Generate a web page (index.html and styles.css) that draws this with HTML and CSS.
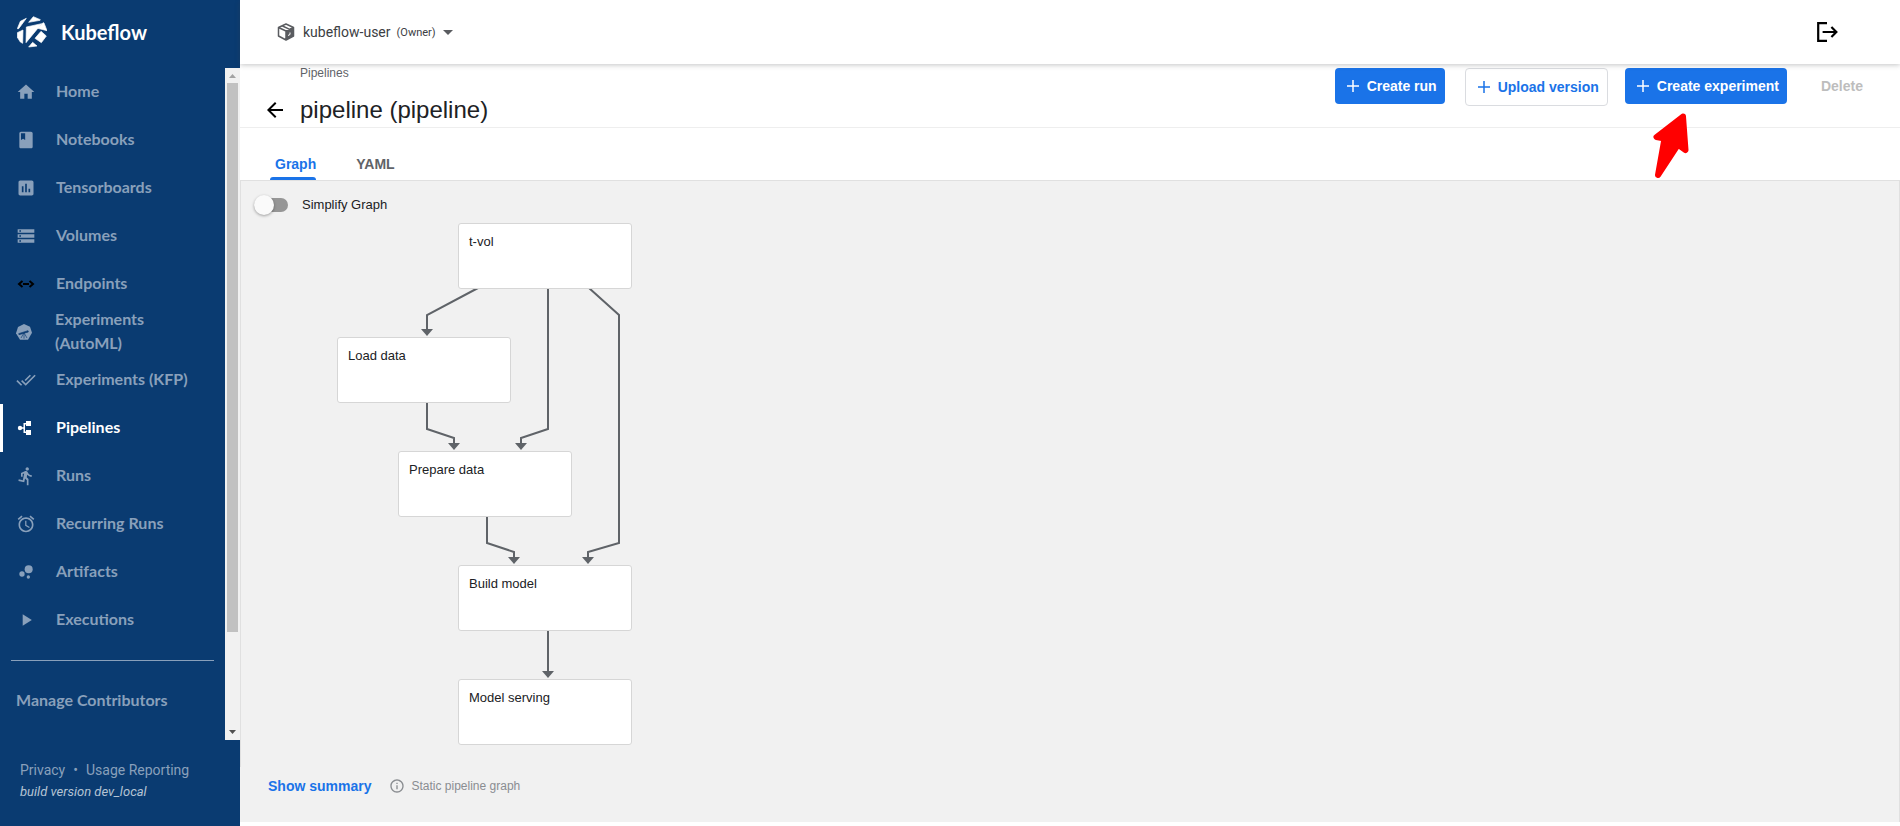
FILE: index.html
```
<!DOCTYPE html>
<html lang="en">
<head>
<meta charset="utf-8">
<title>Kubeflow Central Dashboard</title>
<link rel="stylesheet" href="styles.css">
</head>
<body>
<div class="app">
  <aside class="sidebar">
    <a class="brand" href="#">
      <svg class="brand-logo" viewBox="0 0 90 96" fill="#fff" stroke="#fff" stroke-width="2" stroke-linejoin="round">
        <path d="M28 7 L10 16 L1 38 L5 38 Z"/>
        <path d="M35 19 L49 2 L70 11 L69 13 Z"/>
        <path d="M28 33 L74 23 L27 80 Z"/>
        <path d="M78 20 L81 21 L90 44 L62 37 Z"/>
        <path d="M1 50 L18 42 L17 82 L10 78 L1 64 Z"/>
        <path d="M72 46 L88 60 L73 80 L54 67 Z"/>
        <path d="M35 93 L47 79 L60 90 Z"/>
      </svg>
      <span>Kubeflow</span>
    </a>
    <div class="scroll-area">
      <nav class="menu">
        <a class="item" href="#"><svg viewBox="0 0 24 24"><path d="M10 20v-6h4v6h5v-8h3L12 3 2 12h3v8z"/></svg><span>Home</span></a>
        <a class="item" href="#"><svg viewBox="0 0 24 24"><path d="M18 2H6c-1.100 0-2 .9-2 2v16c0 1.100.9 2 2 2h12c1.100 0 2-.9 2-2V4c0-1.100-.9-2-2-2zM6 4h5v8l-2.500-1.500L6 12V4z"/></svg><span>Notebooks</span></a>
        <a class="item" href="#"><svg viewBox="0 0 24 24"><path d="M19 3H5c-1.100 0-2 .9-2 2v14c0 1.100.9 2 2 2h14c1.100 0 2-.9 2-2V5c0-1.100-.9-2-2-2zM9 17H7v-7h2v7zm4 0h-2V7h2v10zm4 0h-2v-4h2v4z"/></svg><span>Tensorboards</span></a>
        <a class="item" href="#"><svg viewBox="0 0 24 24"><path d="M2 20h20v-4H2v4zm2-3h2v2H4v-2zM2 4v4h20V4H2zm4 3H4V5h2v2zm-4 7h20v-4H2v4zm2-3h2v2H4v-2z"/></svg><span>Volumes</span></a>
        <a class="item" href="#"><svg class="dark" viewBox="0 0 20 20"><path d="M6.500 7L3 10l3.500 3M13.500 7l3.500 3-3.500 3M7 10h6"/></svg><span>Endpoints</span></a>
        <a class="item automl" href="#"><svg viewBox="0 0 48 48"><path d="M24 0 L42 8 L48 26 L36 47 H12 L0 28 L6 9 Z"/><path class="cut" d="M8 29 L36 20 L37 24 L9 32 Z M24 27 V44 M23 28 L15 42 M25 28 L33 42"/></svg><span>Experiments (AutoML)</span></a>
        <a class="item" href="#"><svg viewBox="0 0 24 24"><path d="M18 7l-1.410-1.410-6.340 6.340 1.410 1.410L18 7zm4.240-1.410L11.660 16.170 7.480 12l-1.410 1.410L11.660 19l12-12-1.420-1.410zM.410 13.410L6 19l1.410-1.410L1.830 12 .410 13.410z"/></svg><span>Experiments (KFP)</span></a>
        <a class="item active" href="#"><svg viewBox="0 0 20 20"><circle cx="4" cy="10" r="2.200"/><path d="M10 3h5v5h-5V6.500H9v7h1V12h5v5h-5v-2H7.500v-4.300H4V9.300h3.500V5H10z"/></svg><span>Pipelines</span></a>
        <a class="item" href="#"><svg viewBox="0 0 24 24"><path d="M13.490 5.480c1.100 0 2-.9 2-2s-.9-2-2-2-2 .9-2 2 .9 2 2 2zm-3.600 13.900l1-4.400 2.100 2v6h2v-7.500l-2.100-2 .6-3c1.300 1.500 3.300 2.500 5.500 2.500v-2c-1.900 0-3.500-1-4.300-2.400l-1-1.600c-.4-.6-1-1-1.700-1-.3 0-.5.100-.8.100l-5.200 2.200v4.700h2v-3.400l1.800-.7-1.600 8.100-4.900-1-.4 2 7 1.400z"/></svg><span>Runs</span></a>
        <a class="item" href="#"><svg viewBox="0 0 24 24"><path d="M22 5.720l-4.600-3.860-1.290 1.530 4.600 3.860L22 5.720zM7.880 3.390L6.600 1.860 2 5.710l1.290 1.530 4.590-3.850zM12.500 8H11v6l4.750 2.850.75-1.230-4-2.370V8zM12 4c-4.970 0-9 4.030-9 9s4.020 9 9 9c4.970 0 9-4.030 9-9s-4.030-9-9-9zm0 16c-3.870 0-7-3.130-7-7s3.130-7 7-7 7 3.130 7 7-3.130 7-7 7z"/></svg><span>Recurring Runs</span></a>
        <a class="item" href="#"><svg viewBox="0 0 24 24"><circle cx="7.200" cy="14.400" r="3.200"/><circle cx="14.800" cy="18" r="2"/><circle cx="15.200" cy="8.800" r="4.800"/></svg><span>Artifacts</span></a>
        <a class="item" href="#"><svg viewBox="0 0 24 24"><path d="M8 5v14l11-7z"/></svg><span>Executions</span></a>
        <hr class="divider">
        <a class="item" href="#"><span>Manage Contributors</span></a>
      </nav>
      <div class="scrollbar" aria-hidden="true">
        <svg viewBox="0 0 15 15"><path d="M4 10h7L7.500 6z" fill="#a3a3a3"/></svg>
        <div class="thumb"></div>
        <svg viewBox="0 0 15 15"><path d="M4 5h7L7.500 9z" fill="#505050"/></svg>
      </div>
    </div>
    <footer class="side-footer">
      <div class="links"><a href="#">Privacy</a><span class="dot">•</span><a href="#">Usage Reporting</a></div>
      <div class="build">build version dev_local</div>
    </footer>
  </aside>

  <div class="main">
    <header class="topbar">
      <button class="namespace" type="button">
        <svg class="cube" viewBox="0 0 18 18"><path d="M9 1 L16.500 4.500 V13 L9 17 L1.500 13 V4.500 Z M1.500 4.500 L9 8 L16.500 4.500 M9 8 V17 M5 2.800 L12.700 6.400" fill="none" stroke="#5a5c60" stroke-width="1.500" stroke-linejoin="round"/><path d="M9 8 L16.500 4.500 V13 L9 17Z" fill="#5a5c60"/><path d="M11 12.500l2-1v-2" fill="none" stroke="#fff"/></svg>
        <span class="ns-name">kubeflow-user</span>
        <span class="ns-role">(Owner)</span>
        <svg class="caret" viewBox="0 0 10 5"><path d="M0 0h10L5 5z" fill="#5a5c60"/></svg>
      </button>
      <button class="logout" type="button" aria-label="Logout">
        <svg viewBox="0 0 20 20" fill="none" stroke="#000" stroke-width="2"><path d="M10 2H2v16h8M6 10h12M14 5.500l4.500 4.500-4.500 4.500"/></svg>
      </button>
    </header>

    <section class="toolbar">
      <div class="heading">
        <a class="crumb" href="#">Pipelines</a>
        <div class="title-row">
          <button class="back" type="button" aria-label="Back"><svg viewBox="0 0 24 24"><path d="M20 11H7.830l5.590-5.590L12 4l-8 8 8 8 1.410-1.410L7.830 13H20v-2z"/></svg></button>
          <h1>pipeline (pipeline)</h1>
        </div>
      </div>
      <div class="actions">
        <button class="btn primary" type="button"><svg viewBox="0 0 12 12"><path d="M6 0v12M0 6h12"/></svg>Create run</button>
        <button class="btn outline" type="button"><svg viewBox="0 0 12 12"><path d="M6 0v12M0 6h12"/></svg>Upload version</button>
        <button class="btn primary" type="button"><svg viewBox="0 0 12 12"><path d="M6 0v12M0 6h12"/></svg>Create experiment</button>
        <button class="btn plain" type="button" disabled>Delete</button>
        <svg class="pointer" viewBox="0 0 36 66"><path d="M30 3.500 L3.500 24 L11.500 25.500 L5 62 L25 31.500 L32.500 37 Z" fill="#f00" stroke="#f00" stroke-width="6" stroke-linejoin="round"/></svg>
      </div>
    </section>

    <div class="tabs" role="tablist">
      <button class="tab selected" role="tab" aria-selected="true" type="button">Graph</button>
      <button class="tab" role="tab" aria-selected="false" type="button">YAML</button>
    </div>

    <section class="graph">
      <label class="simplify"><input class="switch" type="checkbox" role="switch"><span>Simplify Graph</span></label>
      <div class="canvas">
        <svg class="edges" viewBox="0 0 400 560">
          <g fill="none" stroke="#5f6368" stroke-width="2">
            <path d="M237 65 L186 92 V108"/>
            <path d="M307 65 V206 L280 215 V222"/>
            <path d="M348 65 L378 92 V320 L347 329 V336"/>
            <path d="M186 180 V206 L213 215 V222"/>
            <path d="M246 294 V320 L273 329 V336"/>
            <path d="M307 408 V450"/>
          </g>
          <g fill="#5f6368">
            <path d="M180 106h12l-6 7z"/><path d="M207 220h12l-6 7z"/><path d="M274 220h12l-6 7z"/>
            <path d="M267 334h12l-6 7z"/><path d="M341 334h12l-6 7z"/><path d="M301 448h12l-6 7z"/>
          </g>
        </svg>
        <div class="node n1">t-vol</div>
        <div class="node n2">Load data</div>
        <div class="node n3">Prepare data</div>
        <div class="node n4">Build model</div>
        <div class="node n5">Model serving</div>
      </div>
    </section>
    <div class="legend">
      <button class="summary" type="button">Show summary</button>
      <svg viewBox="0 0 24 24"><path d="M11 17h2v-6h-2v6zm1-15C6.480 2 2 6.480 2 12s4.480 10 10 10 10-4.480 10-10S17.520 2 12 2zm0 18c-4.410 0-8-3.590-8-8s3.590-8 8-8 8 3.590 8 8-3.590 8-8 8zM11 9h2V7h-2v2z"/></svg>
      <span>Static pipeline graph</span>
    </div>
  </div>
</div>
</body>
</html>
```
FILE: styles.css
```
* { box-sizing: border-box; }
body {
  margin: 0;
  font-family: "Liberation Sans", Arial, sans-serif;
  font-size: 13px;
  color: #202124;
  background: #fff;
}
a { color: inherit; text-decoration: none; }
button { font: inherit; color: inherit; background: none; border: 0; padding: 0; margin: 0; }
svg { display: block; flex: none; }

.app { display: flex; height: 100vh; }

/* Sidebar */
.sidebar {
  display: flex;
  flex-direction: column;
  flex: none;
  width: 240px;
  background: #0a3b71;
  color: #89a0bb;
}
.brand {
  display: flex;
  align-items: center;
  flex: none;
  gap: 14px;
  height: 68px;
  padding: 0 0 4px 17px;
  color: #fff;
  font: 700 20px Lato, sans-serif;
}
.brand-logo { width: 30px; height: 32px; }
.scroll-area { display: flex; flex: 1; min-height: 0; }
.menu { flex: 1; min-width: 0; overflow: hidden; }
.item {
  display: flex;
  align-items: center;
  gap: 20px;
  height: 48px;
  padding: 0 16px;
  font: 700 16px/24px Lato, sans-serif;
}
.item span { padding-bottom: 2px; }
.item svg { width: 20px; height: 20px; fill: #89a0bb; }
.item .dark { fill: none; stroke: #000; stroke-width: 2; }
.automl { gap: 23px; }
.automl svg { width: 16px; height: 16px; }
.automl .cut { fill: #0a3b71; stroke: #0a3b71; stroke-width: 2; }
.item.active { color: #fff; box-shadow: inset 3px 0 #fff; }
.item.active svg { fill: #fff; }
.divider { height: 1px; margin: 16px 11px; border: 0; background: #89a0bb; }
.scrollbar { display: flex; flex-direction: column; flex: none; width: 15px; background: #f1f1f1; }
.scrollbar svg { width: 15px; height: 15px; }
.thumb { width: 11px; height: 549px; margin: 0 auto auto; background: #c1c1c1; }
.side-footer {
  flex: none;
  height: 86px;
  padding: 20px;
  font: 14px/21px Roboto, sans-serif;
}
.links { display: flex; gap: 8px; }
.build { font-size: 13px; font-style: italic; color: #b5c4d4; }

/* Top bar */
.main { display: flex; flex-direction: column; flex: 1; min-width: 0; }
.topbar {
  display: flex;
  align-items: center;
  justify-content: space-between;
  flex: none;
  position: relative;
  z-index: 1;
  height: 64px;
  padding: 0 62px 0 37px;
  background: #fff;
  box-shadow: 0 1px 5px rgba(60, 64, 67, .3);
}
.namespace { display: flex; align-items: center; font: 14px Roboto, sans-serif; color: #3c4043; }
.cube { width: 18px; height: 18px; margin-right: 8px; }
.ns-role { margin: 1px 7px 0 6px; font-size: 11px; }
.caret { width: 10px; height: 5px; }
.logout svg { width: 22px; height: 22px; }

/* Page toolbar */
.toolbar {
  display: flex;
  justify-content: space-between;
  flex: none;
  height: 64px;
  padding: 0 29px 0 23px;
  border-bottom: 1px solid #eee;
}
.crumb { display: block; margin: 2px 0 0 37px; font-size: 12px; line-height: 14px; color: #5f6368; }
.title-row { display: flex; align-items: center; gap: 13px; margin-top: 16px; }
.back svg { width: 24px; height: 24px; fill: #000; }
h1 { margin: 0; font-size: 24px; font-weight: 400; line-height: 28px; }
.actions { display: flex; align-items: flex-start; position: relative; padding-top: 4px; }
.btn {
  display: flex;
  align-items: center;
  gap: 8px;
  height: 36px;
  padding: 0 8px 0 12px;
  border-radius: 4px;
  font-size: 14px;
  font-weight: 700;
}
.btn svg { width: 12px; height: 12px; fill: none; stroke: currentColor; stroke-width: 1.500; }
.primary { background: #1a73e8; color: #fff; }
.outline { height: 38px; margin: 0 17px 0 20px; border: 1px solid #dadce0; color: #1a73e8; }
.plain { margin-left: 22px; color: #bdbdbd; }
.pointer { position: absolute; right: 182px; top: 49px; width: 36px; height: 66px; }

/* Tabs */
.tabs {
  display: flex;
  flex: none;
  gap: 30px;
  height: 53px;
  padding: 20px 0 0 30px;
  border-bottom: 1px solid #e0e0e0;
}
.tab { position: relative; height: 32px; padding: 0 5px; font-size: 14px; font-weight: 700; color: #5f6368; }
.selected { color: #1a73e8; }
.selected::after {
  content: "";
  position: absolute;
  left: 0;
  right: 5px;
  bottom: 0;
  height: 3px;
  border-radius: 3px 3px 0 0;
  background: #1a73e8;
}

/* Graph */
.graph {
  display: flex;
  flex-direction: column;
  flex: 1;
  min-height: 0;
  border: solid #e0e0e0;
  border-width: 0 1px;
  background: #f1f1f1;
}
.simplify { display: flex; align-items: center; gap: 14px; height: 48px; padding-left: 13px; }
.simplify span { padding-bottom: 2px; }
.switch {
  appearance: none;
  position: relative;
  width: 34px;
  height: 14px;
  margin: 0;
  border-radius: 7px;
  background: #969696;
}
.switch::before {
  content: "";
  position: absolute;
  left: 0;
  top: -3px;
  width: 20px;
  height: 20px;
  border-radius: 50%;
  background: #fafafa;
  box-shadow: 0 1px 3px rgba(0, 0, 0, .35);
}
.canvas { position: relative; flex: 1; }
.edges { position: absolute; left: 0; top: -6px; width: 400px; height: 560px; }
.node {
  position: absolute;
  width: 174px;
  height: 66px;
  padding: 10px;
  border: 1px solid #d6d6d6;
  border-radius: 3px;
  background: #fff;
  line-height: 16px;
}
.n1 { left: 217px; top: -6px; }
.n2 { left: 96px; top: 108px; }
.n3 { left: 157px; top: 222px; }
.n4 { left: 217px; top: 336px; }
.n5 { left: 217px; top: 450px; }
.legend {
  display: flex;
  align-items: center;
  flex: none;
  height: 55px;
  margin-bottom: 4px;
  padding: 0 0 18px 28px;
  border-right: 1px solid #e0e0e0;
  background: #f1f1f1;
  font-size: 12px;
  color: #8a8d91;
}
.summary { margin-right: 18px; font-size: 14px; font-weight: 700; color: #1a73e8; }
.legend svg { width: 16px; height: 16px; margin-right: 6px; fill: #8a8d91; }
```
